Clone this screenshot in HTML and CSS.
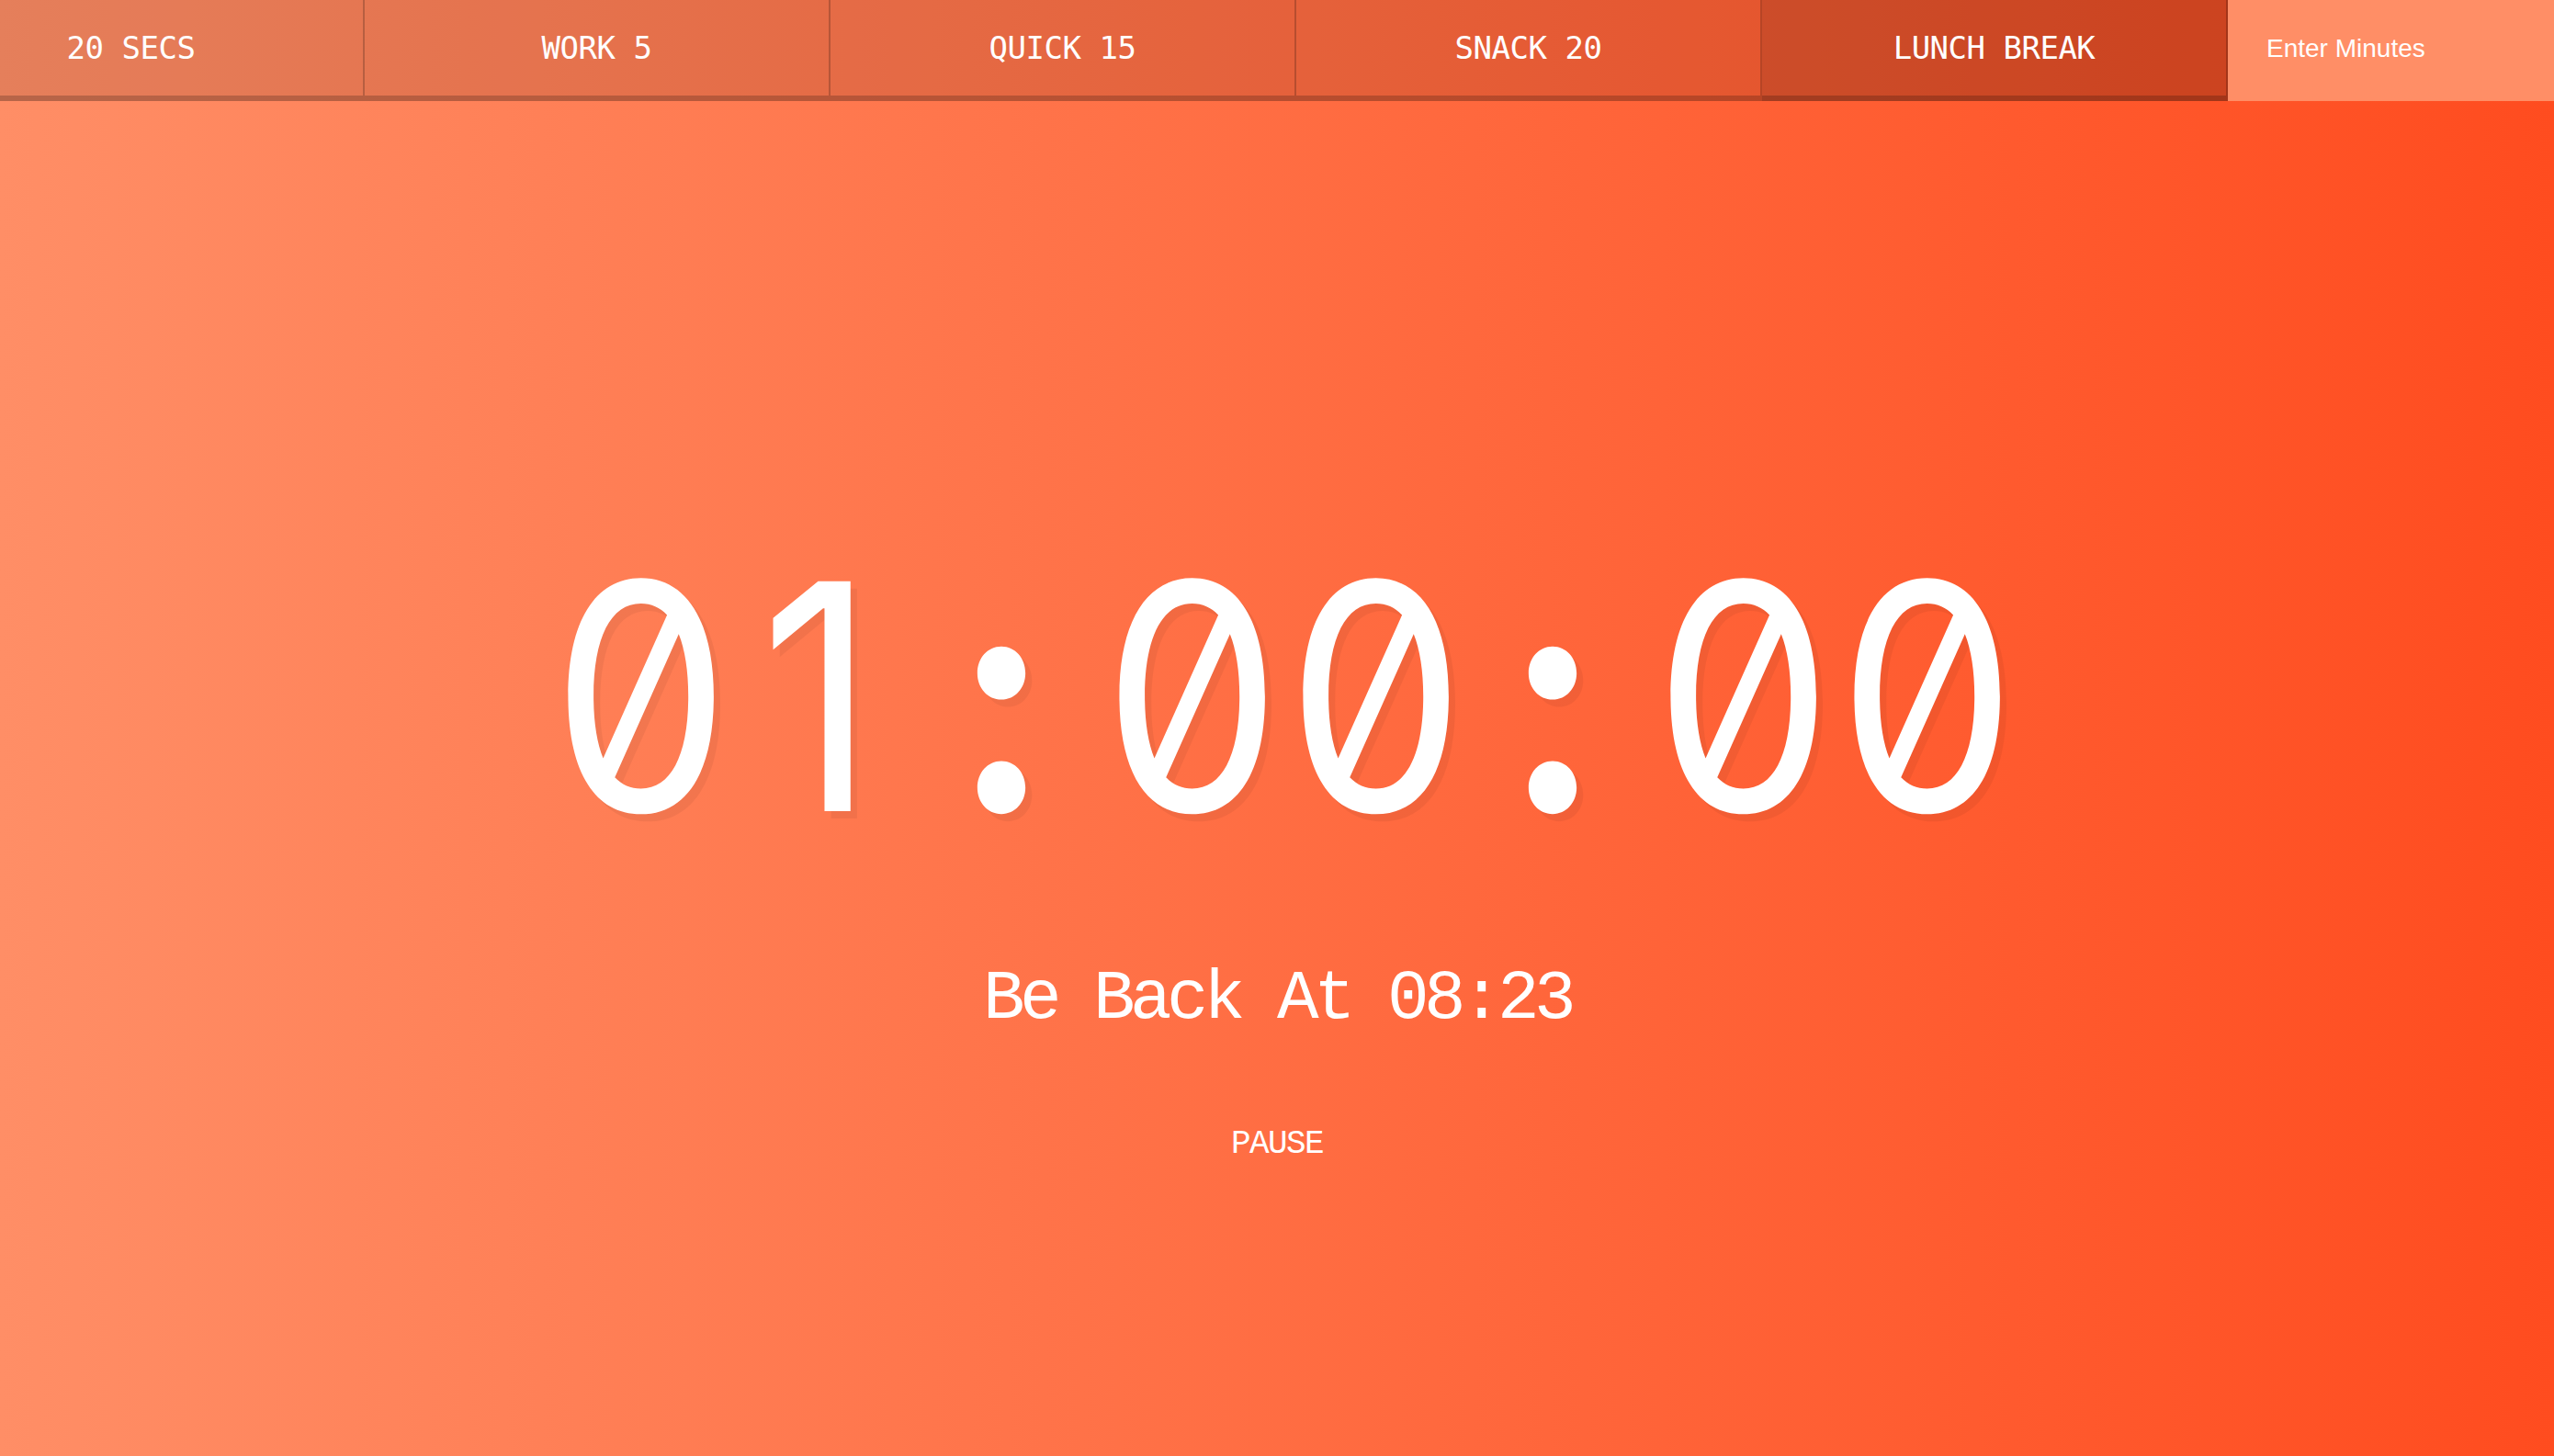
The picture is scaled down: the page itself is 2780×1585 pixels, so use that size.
FILE: index.html
```html
<!DOCTYPE html>
<html lang="en">
<head>
<meta charset="utf-8">
<title>Countdown Timer</title>
<link rel="stylesheet" href="styles.css">
</head>
<body>
<div class="timer">
  <div class="timer__controls">
    <button class="timer__button timer__button--first">20 Secs</button>
    <button class="timer__button">Work 5</button>
    <button class="timer__button">Quick 15</button>
    <button class="timer__button">Snack 20</button>
    <button class="timer__button timer__button--active">Lunch Break</button>
    <form class="timer__form">
      <input type="text" name="minutes" placeholder="Enter Minutes">
    </form>
  </div>
  <div class="display">
    <h1 class="display__time-left"><span class="ch">0</span><span class="ch">1</span><span class="ch ch--colon">:</span><span class="ch">0</span><span class="ch">0</span><span class="ch ch--colon">:</span><span class="ch">0</span><span class="ch">0</span></h1>
    <p class="display__end-time">Be Back At 08:23</p>
    <button class="display__pause">Pause</button>
  </div>
</div>
</body>
</html>
```

FILE: styles.css
```css
html {
  box-sizing: border-box;
}
*, *::before, *::after {
  box-sizing: inherit;
}
body {
  margin: 0;
  text-align: center;
  font-family: "Liberation Mono", monospace;
  background: linear-gradient(to right, #ff8e66 0%, #ff4c1f 100%);
  min-height: 100vh;
}
.timer {
  display: flex;
  flex-direction: column;
  min-height: 100vh;
}
.timer__controls {
  display: grid;
  grid-template-columns: 397px repeat(4, 1fr) 355px;
  height: 110px;
}
.timer__button {
  height: 110px;
  margin: 0;
  padding: 0;
  border: 0;
  border-bottom: 6px solid rgba(0, 0, 0, 0.2);
  border-right: 2px solid rgba(0, 0, 0, 0.2);
  background: rgba(0, 0, 0, 0.1);
  color: #fff;
  font-family: "DejaVu Sans Mono", monospace;
  font-size: 34px;
  letter-spacing: -0.5px;
  text-transform: uppercase;
  cursor: pointer;
}
.timer__button--first {
  padding-left: 20px;
  padding-right: 130px;
}
.timer__button--active {
  background: rgba(0, 0, 0, 0.2);
}
.timer__form {
  display: flex;
  margin: 0;
}
.timer__form input {
  flex: 1;
  border: 0;
  margin: 0;
  padding: 0 0 4px 42px;
  background: #ff8e66;
  color: #fff;
  font-family: "Liberation Sans", Arial, sans-serif;
  font-size: 28px;
  outline: 0;
}
.timer__form input::placeholder {
  color: #fff;
  opacity: 1;
}
.display {
  flex: 1;
  display: flex;
  flex-direction: column;
  align-items: center;
  justify-content: flex-start;
  padding-top: 476px;
}
.display__time-left {
  display: flex;
  margin: 0;
  font-family: "Inter", sans-serif;
  font-weight: 400;
  font-size: 344px;
  line-height: 1;
  font-feature-settings: "zero" 1;
  color: #fff;
  text-shadow: 8px 8px 0 rgba(0, 0, 0, 0.05);
  white-space: nowrap;
}
.ch {
  display: block;
  width: 200px;
  text-align: center;
  transform: scaleX(0.9);
}
.ch--colon {
  font-weight: 700;
}
.display__end-time {
  margin: 120px 0 0;
  font-size: 76px;
  line-height: 1;
  letter-spacing: -5.6px;
  color: #fff;
}
.display__pause {
  margin: 102px 0 0;
  padding: 0;
  border: 0;
  background: none;
  color: #fff;
  font-family: "Liberation Mono", monospace;
  font-size: 36px;
  letter-spacing: -1.6px;
  line-height: 1;
  text-transform: uppercase;
  cursor: pointer;
}
```
